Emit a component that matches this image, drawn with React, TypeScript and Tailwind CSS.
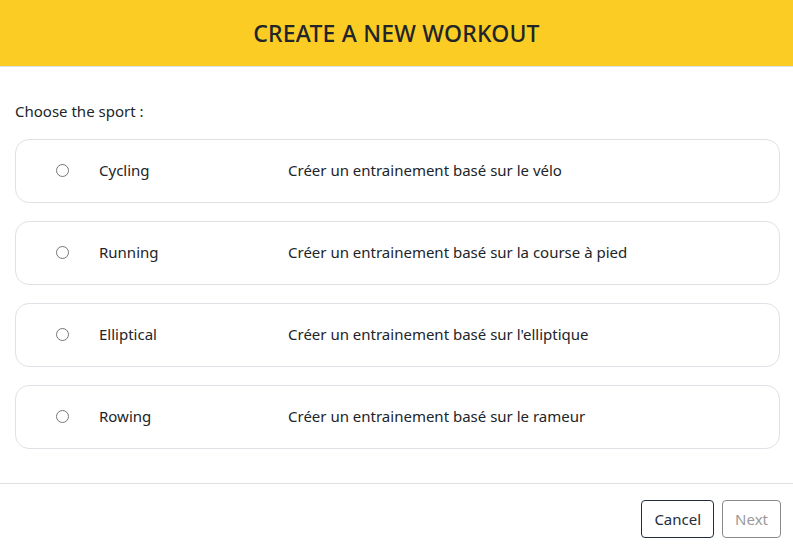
const sports = [
  { name: "Cycling", desc: "Créer un entrainement basé sur le vélo" },
  { name: "Running", desc: "Créer un entrainement basé sur la course à pied" },
  { name: "Elliptical", desc: "Créer un entrainement basé sur l'elliptique" },
  { name: "Rowing", desc: "Créer un entrainement basé sur le rameur" },
];

export default function App() {
  return (
    <div className="w-[793px] h-[547px] bg-white text-[#212529] font-['Noto_Sans',sans-serif] flex flex-col">
      <div className="h-[67px] bg-[#fbcd24] border-b border-[#dee2e6] flex items-center justify-center">
        <h1 className="text-[23px] font-medium tracking-[0.2px] text-[#212529]">CREATE A NEW WORKOUT</h1>
      </div>

      <div className="pl-[15px] pr-[13px] pt-[33px] flex-1">
        <p className="text-[15px] mb-[16px]">Choose the sport :</p>
        <div className="flex flex-col gap-[18px]">
          {sports.map((s) => (
            <label
              key={s.name}
              className="h-[64px] border border-[#dee2e6] rounded-[14px] flex items-center text-[15px]"
            >
              <span className="w-[13px] h-[13px] rounded-full border border-[#767676] ml-[40px] mr-[30px] bg-white" />
              <span className="w-[189px]">{s.name}</span>
              <span>{s.desc}</span>
            </label>
          ))}
        </div>
      </div>

      <div className="h-[64px] border-t border-[#dee2e6] flex items-start pt-[16px] justify-end gap-[8px] px-[12px]">
        <button className="h-[38px] px-[12px] border border-[#212d3b] rounded-[4px] text-[15px] text-[#212d3b]">
          Cancel
        </button>
        <button className="h-[38px] px-[12px] border border-[#8a8a8a] rounded-[4px] text-[15px] text-[#9a9a9a]">
          Next
        </button>
      </div>
    </div>
  );
}
